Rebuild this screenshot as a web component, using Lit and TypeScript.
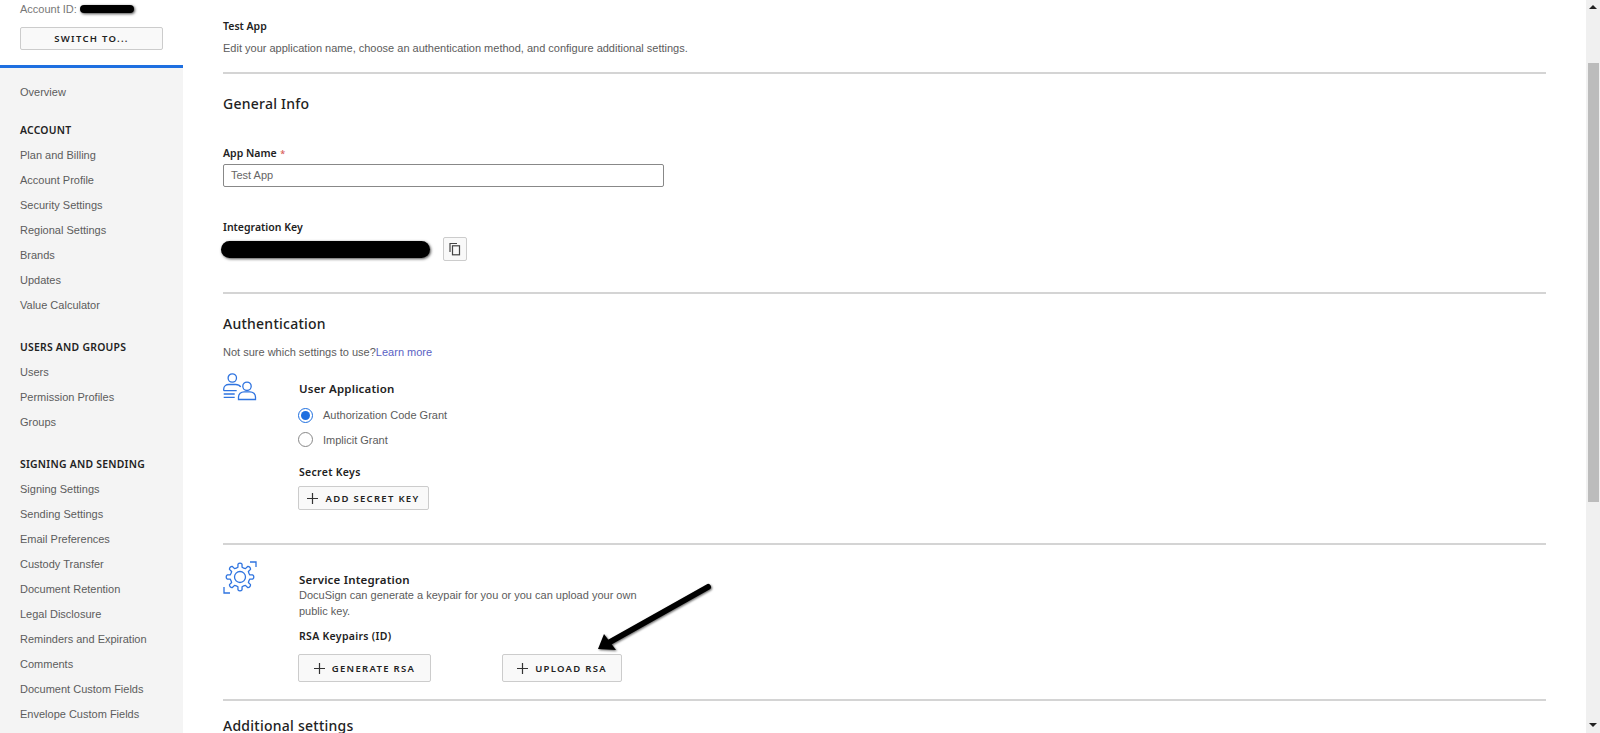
import { LitElement, html, css } from "lit";
import { customElement } from "lit/decorators.js";

const groups = [
  { title: "", items: ["Overview"] },
  { title: "ACCOUNT", items: ["Plan and Billing", "Account Profile", "Security Settings", "Regional Settings", "Brands", "Updates", "Value Calculator"] },
  { title: "USERS AND GROUPS", items: ["Users", "Permission Profiles", "Groups"] },
  { title: "SIGNING AND SENDING", items: ["Signing Settings", "Sending Settings", "Email Preferences", "Custody Transfer", "Document Retention", "Legal Disclosure", "Reminders and Expiration", "Comments", "Document Custom Fields", "Envelope Custom Fields"] },
];

const plus = html`<svg class="plus" viewBox="0 0 11 11" width="11" height="11"><path d="M5.500 0v11M0 5.500h11" stroke="#333" stroke-width="1.2" fill="none"/></svg>`;

function gearPath(cx: number, cy: number, ro: number, ri: number): string {
  const pt = (r: number, deg: number) => {
    const a = (deg * Math.PI) / 180;
    return `${(cx + r * Math.cos(a)).toFixed(2)} ${(cy + r * Math.sin(a)).toFixed(2)}`;
  };
  let d = "";
  for (let i = 0; i < 8; i++) {
    const a = i * 45 - 90;
    d += `${i === 0 ? "M" : "A" + ri + " " + ri + " 0 0 0 "}${pt(ri, a - 12)} `;
    d += `L${pt(ro, a - 9)} A2.6 2.6 0 0 1 ${pt(ro, a + 9)} L${pt(ri, a + 12)} `;
  }
  return d + `A${ri} ${ri} 0 0 0 ${pt(ri, -102)}z`;
}

@customElement("app-root")
export class AppRoot extends LitElement {
  static styles = css`
    :host { display: block; position: relative; width: 1600px; height: 733px; overflow: hidden; background: #fff; font-family: "Liberation Sans", Arial, sans-serif; font-size: 11px; color: #5c5c5c; }
    .page { display: flex; height: 733px; }
    .side { width: 183px; flex: none; display: flex; flex-direction: column; overflow: hidden; }
    .side-top { height: 65px; flex: none; box-sizing: border-box; padding: 0 20px; }
    .acct { height: 27px; display: flex; align-items: center; gap: 3px; margin-top: -5px; color: #777; }
    .blob { display: inline-block; background: #000; border-radius: 10px; box-shadow: 1px 1px 3px rgba(0,0,0,.7); }
    .blob.a { width: 54px; height: 8px; }
    .switch { width: 143px; height: 23px; box-sizing: border-box; margin-top: 5px; border: 1px solid #ccc; background: #f9f9f9; border-radius: 2px; display: flex; align-items: center; justify-content: center; }
    .btn-t { font-family: "Noto Sans", sans-serif; font-size: 9.5px; font-weight: 600; letter-spacing: 1.3px; color: #222; }
    .nav { flex: 1; background: #f4f4f4; border-top: 3px solid #1e6fe0; padding: 12px 20px 0; }
    .nav h4 { margin: 0; height: 25px; line-height: 25.5px; font-family: "Noto Sans", sans-serif; font-size: 10.4px; font-weight: 600; color: #222; letter-spacing: .25px; }
    .nav a { display: block; height: 25px; line-height: 25px; color: #5c5c5c; }
    .group { margin-bottom: 17px; }
    .group:first-child { margin-bottom: 13px; }
    .group:nth-child(3) { margin-bottom: 16.5px; }
    .main { width: 1323px; margin-left: 40px; flex: none; }
    .title { font-family: "Noto Sans", sans-serif; font-weight: 600; color: #222; font-size: 10.5px; margin-top: 20px; height: 13px; line-height: 13px; }
    .desc { margin-top: 8px; height: 14px; line-height: 14px; }
    .rule { height: 2px; background: #d4d4d4; }
    .r1 { margin-top: 17px; }
    h2 { margin: 0; font-family: "Noto Sans", sans-serif; font-weight: 500; color: #222; font-size: 14px; letter-spacing: .25px; line-height: 17.5px; height: 18px; }
    .label { font-family: "Noto Sans", sans-serif; font-size: 10.5px; color: #222; height: 13px; line-height: 13px; font-weight: 600; }
    .req { color: #d9655f; font-size: 9px; margin-left: 1px; }
    .gi { margin-top: 21px; }
    .an { margin-top: 34px; }
    .input { margin-top: 4px; width: 441px; height: 23px; box-sizing: border-box; border: 1px solid #888; border-radius: 2px; padding-left: 7px; line-height: 21px; color: #666; }
    .ik { margin-top: 34px; }
    .keyrow { display: flex; margin-top: 3px; margin-left: -2px; align-items: center; gap: 13px; }
    .blob.k { width: 209px; height: 17px; }
    .copy { width: 24px; height: 24px; box-sizing: border-box; border: 1px solid #ccc; background: #f9f9f9; border-radius: 2px; display: flex; align-items: center; justify-content: center; }
    .r2 { margin-top: 31px; }
    .au { margin-top: 21px; }
    .ns { margin-top: 12px; height: 14px; line-height: 14px; }
    .ns a { color: #5a62c4; }
    .sec { display: flex; }
    .ic { width: 75px; flex: none; }
    .ic svg { display: block; }
    .h3 { font-family: "Noto Sans", sans-serif; font-size: 11.5px; font-weight: 600; color: #222; height: 14px; line-height: 14px; letter-spacing: .2px; margin-left: 1px; }
    .ua { margin-top: 14px; }
    .ua .h3 { margin-top: 9px; }
    .radio { display: flex; align-items: center; gap: 10px; height: 24.5px; }
    .dot { width: 15px; height: 15px; box-sizing: border-box; border-radius: 50%; border: 1px solid #888; background: #fff; display: flex; align-items: center; justify-content: center; }
    .dot.on { border-color: #1e6fe0; }
    .dot.on i { display: block; width: 9px; height: 9px; border-radius: 50%; background: #1e6fe0; }
    .rads { margin-top: 7px; }
    .btn { height: 24px; box-sizing: border-box; border: 1px solid #ccc; background: #f9f9f9; border-radius: 2px; display: inline-flex; align-items: center; justify-content: center; gap: 7px; }
    .plus { flex: none; }
    .sk { margin-top: 14px; margin-left: 1px; letter-spacing: .3px; }
    .add { width: 131px; margin-top: 7px; }
    .r3 { margin-top: 33px; }
    .si { margin-top: 16px; }
    .si .h3 { margin-top: 12px; }
    .p { width: 350px; line-height: 16px; margin-left: 1px; }
    .rk { margin-top: 11px; margin-left: 1px; letter-spacing: .3px; }
    .btns { display: flex; margin-top: 11px; }
    .gen { width: 133px; height: 28px; }
    .up { width: 120px; height: 28px; margin-left: 71px; }
    .r4 { margin-top: 17px; }
    .as { margin-top: 16px; }
    .scroll { position: absolute; right: 0; top: 0; bottom: 0; width: 14px; background: #f0f0f0; }
    .thumb { position: absolute; left: 1.5px; right: 1.5px; top: 63px; height: 439px; background: #bcbcbc; }
    .up-a { position: absolute; left: 3px; top: 5px; }
    .dn-a { position: absolute; left: 3px; top: 722px; }
    .arrow { position: absolute; left: 590px; top: 580px; pointer-events: none; }
  `;

  render() {
    return html`
      <div class="page">
        <aside class="side">
          <div class="side-top">
            <div class="acct">Account ID: <span class="blob a"></span></div>
            <div class="switch"><span class="btn-t">SWITCH TO...</span></div>
          </div>
          <nav class="nav">
            ${groups.map((g) => html`<div class="group">
              ${g.title ? html`<h4>${g.title}</h4>` : ""}
              ${g.items.map((i) => html`<a>${i}</a>`)}
            </div>`)}
          </nav>
        </aside>
        <main class="main">
          <div class="title">Test App</div>
          <div class="desc">Edit your application name, choose an authentication method, and configure additional settings.</div>
          <div class="rule r1"></div>
          <h2 class="gi">General Info</h2>
          <div class="label an">App Name <span class="req">*</span></div>
          <div class="input">Test App</div>
          <div class="label ik">Integration Key</div>
          <div class="keyrow">
            <span class="blob k"></span>
            <span class="copy"><svg width="14" height="14" viewBox="0 0 14 14" fill="none" stroke="#444" stroke-width="1.2"><path d="M2 10V1.500h7"/><rect x="4.500" y="3.800" width="7" height="9"/></svg></span>
          </div>
          <div class="rule r2"></div>
          <h2 class="au">Authentication</h2>
          <div class="ns">Not sure which settings to use?<a>Learn more</a></div>
          <div class="sec ua">
            <div class="ic">
              <svg width="36" height="28" viewBox="0 0 36 28" fill="none" stroke="#2f74e0" stroke-width="1.3">
                <circle cx="9.300" cy="5" r="4.200"/>
                <path d="M.7 17.700v-1.500c0-3 2.500-4.700 5-4.700h7c2.300 0 4 .9 5 2.500M.7 17.700h13"/>
                <path d="M.7 21h11M.7 24.300h11"/>
                <circle cx="24" cy="13.300" r="4.200"/>
                <path d="M15.500 26.500v-2.500c0-3 2.500-5.200 5.500-5.200h6c3 0 5.500 2.200 5.500 5.200v2.500z"/>
              </svg>
            </div>
            <div>
              <div class="h3">User Application</div>
              <div class="rads">
                <div class="radio"><span class="dot on"><i></i></span>Authorization Code Grant</div>
                <div class="radio"><span class="dot"></span>Implicit Grant</div>
              </div>
              <div class="label sk">Secret Keys</div>
              <div class="btn add">${plus}<span class="btn-t">ADD SECRET KEY</span></div>
            </div>
          </div>
          <div class="rule r3"></div>
          <div class="sec si">
            <div class="ic">
              <svg width="34" height="34" viewBox="0 0 34 34" fill="none" stroke="#2f74e0" stroke-width="1.3">
                <path d="M27 1h6v5" /><path d="M1 26v6h6"/>
                <circle cx="17" cy="16" r="5.500"/>
                <path stroke-linejoin="round" d="${gearPath(17, 16, 13, 10)}"/>
              </svg>
            </div>
            <div>
              <div class="h3">Service Integration</div>
              <div class="p">DocuSign can generate a keypair for you or you can upload your own public key.</div>
              <div class="label rk">RSA Keypairs (ID)</div>
              <div class="btns">
                <div class="btn gen">${plus}<span class="btn-t">GENERATE RSA</span></div>
                <div class="btn up">${plus}<span class="btn-t">UPLOAD RSA</span></div>
              </div>
            </div>
          </div>
          <div class="rule r4"></div>
          <h2 class="as">Additional settings</h2>
        </main>
      </div>
      <div class="scroll">
        <svg class="up-a" width="8" height="5" viewBox="0 0 8 5"><path d="M4 0l4 4H0z" fill="#222"/></svg>
        <div class="thumb"></div>
        <svg class="dn-a" width="8" height="5" viewBox="0 0 8 5"><path d="M4 5L8 1H0z" fill="#222"/></svg>
      </div>
      <svg class="arrow" width="130" height="80" viewBox="590 580 130 80">
        <defs><filter id="s" x="-20%" y="-20%" width="140%" height="140%"><feDropShadow dx="1" dy="1" stdDeviation="1.200" flood-color="#000" flood-opacity=".6"/></filter></defs>
        <g filter="url(#s)">
          <path d="M708 587L610 642" stroke="#000" stroke-width="6" stroke-linecap="round"/>
          <path d="M598 649l6-15 12 16z" fill="#000"/>
        </g>
      </svg>
    `;
  }
}
